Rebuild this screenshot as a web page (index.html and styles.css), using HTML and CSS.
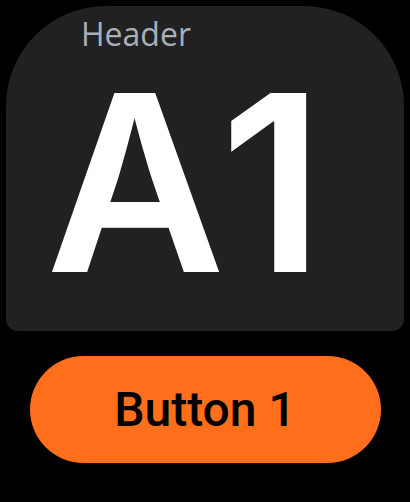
FILE: index.html
```html
<!DOCTYPE html>
<html lang="en">
<head>
    <meta charset="UTF-8">
    <meta name="viewport" content="width=device-width, initial-scale=1.0">
    <title>Tile</title>
    <link rel="stylesheet" href="styles.css">
</head>
<body>

<main class="screen">
    <section class="tile">
        <h2 class="tile-header">Header</h2>
        <div class="tile-value">A1</div>
    </section>

    <button class="action" type="button">Button 1</button>
</main>

</body>
</html>
```

FILE: styles.css
```css
* {
    margin: 0;
    padding: 0;
    box-sizing: border-box;
}

body {
    background-color: #000;
    font-family: "Open Sans", "Noto Sans", sans-serif;
}

.screen {
    width: 410px;
    height: 502px;
    padding: 6px;
    display: flex;
    flex-direction: column;
    align-items: center;
}

/* Karta s nadpisem a hodnotou */
.tile {
    width: 398px;
    height: 325px;
    background-color: #212121;
    border-radius: 100px 100px 12px 12px;
}

.tile-header {
    font-weight: 400;
    font-size: 32px;
    line-height: 32px;
    color: #a9afba;
    margin: 12px 0 0 75px;
}

.tile-value {
    font-family: Inter, "Noto Sans", sans-serif;
    font-weight: 600;
    font-size: 246px;
    line-height: 190px;
    color: #fff;
    letter-spacing: 6px;
    margin: 38px 0 0 40px;
}

/* Oranžové tlačítko */
.action {
    width: 351px;
    height: 107px;
    margin-top: 25px;
    border: none;
    border-radius: 54px;
    background-color: #ff6f1b;
    color: #000;
    font-family: Roboto, sans-serif;
    font-weight: 500;
    font-size: 48px;
    cursor: pointer;
}
```
